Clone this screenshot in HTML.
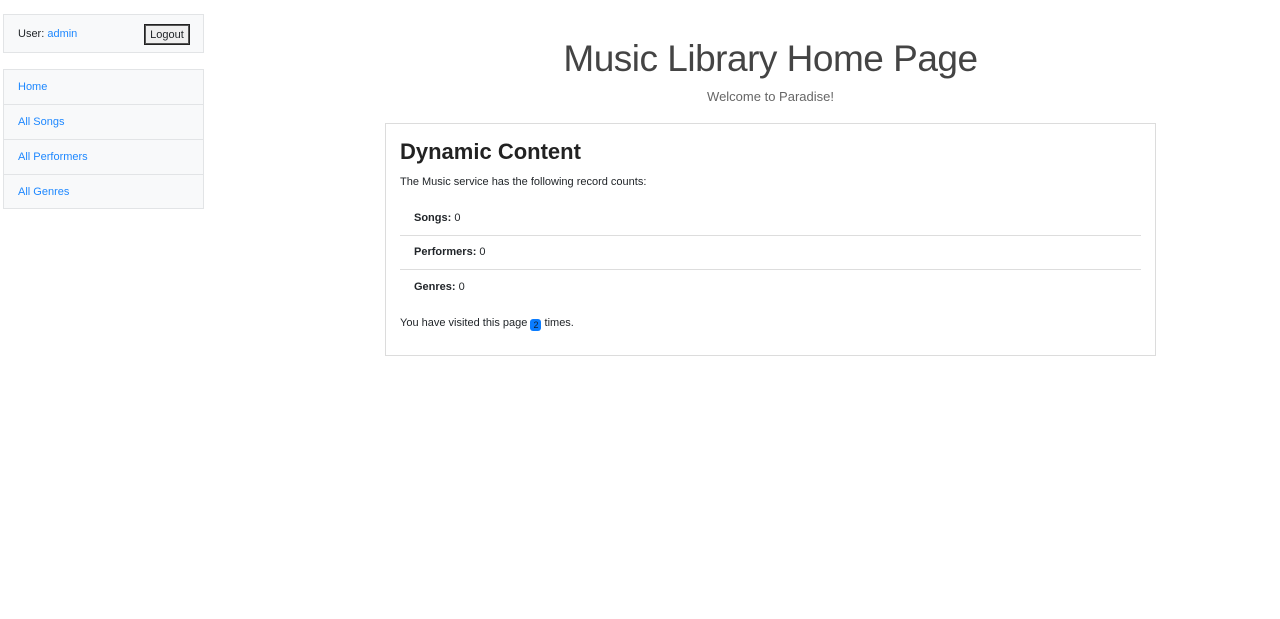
<!DOCTYPE html>
<html><head><style>
body{margin:0;background:#fff;font-family:"Liberation Sans",sans-serif;color:#212529;font-size:11px;}
.box{position:absolute;background:#f8f9fa;border:1px solid #e2e4e6;box-sizing:border-box}
a{color:#1e88ff;text-decoration:none}
.nav div{height:34px;border-bottom:1px solid #e2e4e6;padding-left:14px;line-height:35px;font-size:11px}
.nav div:last-child{border-bottom:none}
</style></head><body>
<div class="box" style="left:3px;top:14px;width:201px;height:39px">
 <span style="position:absolute;left:14px;top:13px">User: <a>admin</a></span>
 <span style="position:absolute;left:140px;top:9px;width:44px;height:19px;border:1px solid #222;box-shadow:inset 0 0 0 1px #555;background:#efefef;text-align:center;line-height:20px;font-size:11px">Logout</span>
</div>
<div class="box nav" style="left:3px;top:69px;width:201px;height:140px">
 <div><a>Home</a></div><div><a>All Songs</a></div><div><a>All Performers</a></div><div><a>All Genres</a></div>
</div>
<div style="position:absolute;left:385px;width:771px;top:38px;text-align:center;font-size:37px;color:#444;letter-spacing:-0.5px">Music Library Home Page</div>
<div style="position:absolute;left:385px;width:771px;top:89px;text-align:center;font-size:13px;color:#666">Welcome to Paradise!</div>
<div style="position:absolute;left:385px;top:123px;width:771px;height:233px;border:1px solid #dcdcdc;box-sizing:border-box">
 <div style="position:absolute;left:14px;top:15px;font-size:22px;font-weight:bold;color:#222">Dynamic Content</div>
 <div style="position:absolute;left:14px;top:52px">The Music service has the following record counts:</div>
 <div style="position:absolute;left:14px;right:14px;top:77px">
  <div style="height:34px;line-height:34px;padding-left:14px;border-bottom:1px solid #ddd"><b>Songs:</b> 0</div>
  <div style="height:33px;line-height:33px;padding-left:14px;border-bottom:1px solid #ddd"><b>Performers:</b> 0</div>
  <div style="height:34px;line-height:34px;padding-left:14px"><b>Genres:</b> 0</div>
 </div>
 <div style="position:absolute;left:14px;top:193px">You have visited this page <span style="display:inline-block;background:#0a7cff;color:#123;border-radius:3px;width:11px;height:12px;line-height:12px;text-align:center;font-size:9px;vertical-align:-2px">2</span> times.</div>
</div>
</body></html>
